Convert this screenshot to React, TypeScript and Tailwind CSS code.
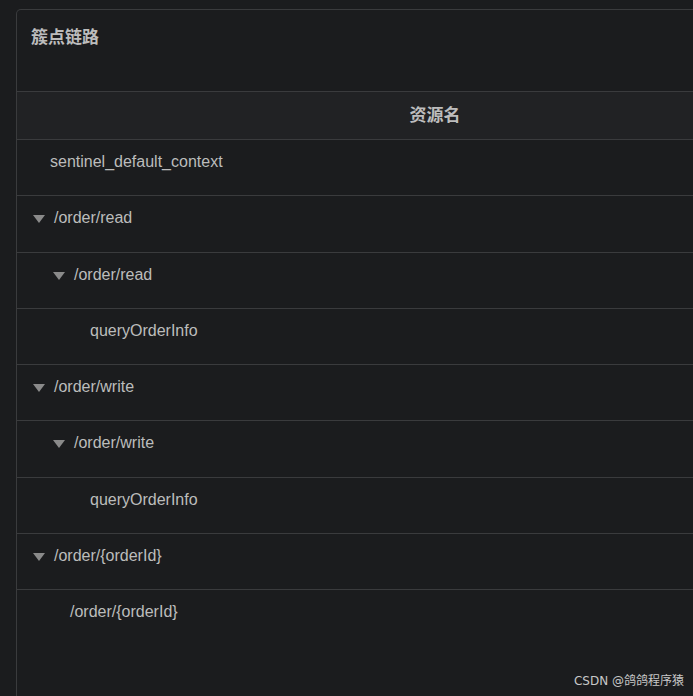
import React from "react";

type Row = { name: string; level: 1 | 2 | 3; expand: boolean; last?: boolean };

const rows: Row[] = [
  { name: "sentinel_default_context", level: 1, expand: false },
  { name: "/order/read", level: 1, expand: true },
  { name: "/order/read", level: 2, expand: true },
  { name: "queryOrderInfo", level: 3, expand: false },
  { name: "/order/write", level: 1, expand: true },
  { name: "/order/write", level: 2, expand: true },
  { name: "queryOrderInfo", level: 3, expand: false },
  { name: "/order/{orderId}", level: 1, expand: true },
  { name: "/order/{orderId}", level: 2, expand: false, last: true },
];

// indent per level, expander rows vs leaf rows
const expandPad = { 1: "pl-[16px]", 2: "pl-[36px]", 3: "pl-[56px]" };
const leafPad = { 1: "pl-[33px]", 2: "pl-[53px]", 3: "pl-[73px]" };

function Caret() {
  return (
    <svg width="12" height="8" viewBox="0 0 12 8" className="mr-[9px] mt-[2px] shrink-0">
      <polygon points="0,0 12,0 6,8" fill="#8a8a8a" />
    </svg>
  );
}

function TreeRow({ row }: { row: Row }) {
  return (
    <div
      className={`h-[56.25px] flex items-start pt-[10px] text-[16px] leading-[24px] text-[#bcbcbc] ${
        row.last ? "" : "border-b border-[#3a3b3d]"
      } ${row.expand ? expandPad[row.level] : leafPad[row.level]}`}
    >
      {row.expand && (
        <span className="h-[24px] flex items-center">
          <Caret />
        </span>
      )}
      <span>{row.name}</span>
    </div>
  );
}

export default function App() {
  return (
    <div className="relative h-[696px] w-full overflow-hidden bg-[#1b1c1e] pt-[9px] pl-4 font-['Liberation_Sans','Noto_Sans_CJK_SC',sans-serif]">
      <div className="w-[838px] h-[700px] rounded-tl-[5px] border-l border-t border-r border-[#3a3b3d]">
        <div className="h-[81px] pl-[14px] pt-[14px] text-[17px] leading-[24px] font-bold text-[#bdbdbd] font-['Noto_Sans_CJK_SC',sans-serif]">
          簇点链路
        </div>
        <div className="h-[49px] pb-[4px] border-y border-[#3a3b3d] bg-[#212224] flex items-center justify-center text-[17px] font-bold text-[#bdbdbd] font-['Noto_Sans_CJK_SC',sans-serif]">
          资源名
        </div>
        {rows.map((r, i) => (
          <TreeRow key={i} row={r} />
        ))}
      </div>
      <div className="absolute right-[9px] bottom-[7px] text-[12px] leading-[16px] text-[#c8c8c8] font-['DejaVu_Sans','Noto_Sans_CJK_SC',sans-serif]">
        CSDN @鸽鸽程序猿
      </div>
    </div>
  );
}
